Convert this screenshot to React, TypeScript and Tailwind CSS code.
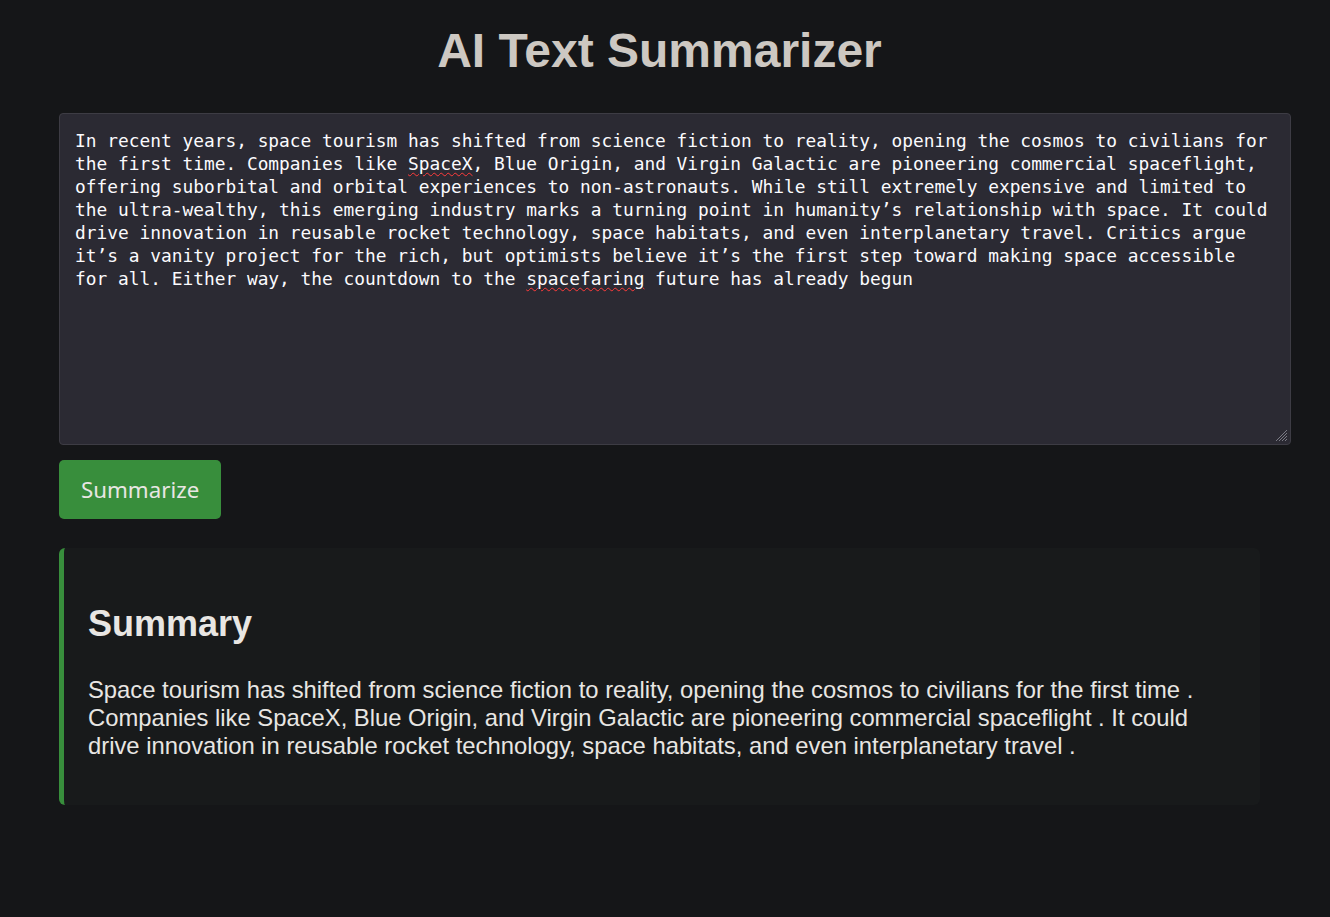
import React from "react";

function Grip() {
  return (
    <svg className="absolute right-[2px] bottom-[2px]" width="13" height="13" viewBox="0 0 13 13">
      <line x1="12" y1="1" x2="1" y2="12" stroke="#7a7a84" strokeWidth="1" />
      <line x1="12" y1="4" x2="4" y2="12" stroke="#7a7a84" strokeWidth="1" />
      <line x1="12" y1="7" x2="7" y2="12" stroke="#7a7a84" strokeWidth="1" />
      <line x1="12" y1="10" x2="10" y2="12" stroke="#7a7a84" strokeWidth="1" />
    </svg>
  );
}

const miss = "underline decoration-wavy decoration-[#ff3b3b] decoration-1 underline-offset-[2px]";

export default function App() {
  return (
    <div className="min-h-[917px] w-full bg-[#151618] font-['Liberation_Sans',Arial,sans-serif]">
      <div className="ml-[59px] w-[1201px] pt-[23px]">
        <h1 className="text-center text-[48px] font-bold leading-[56px] text-[#cdc8c2]">AI Text Summarizer</h1>
        <div
          role="textbox"
          className="relative mt-[34px] h-[332px] w-[1232px] rounded-[4px] border border-[#3d3c44] bg-[#2b2a33] px-[15px] py-[15px] font-['DejaVu_Sans_Mono',monospace] text-[17.85px] leading-[23px] whitespace-pre-wrap text-[#fbfbfe]"
        >
          In recent years, space tourism has shifted from science fiction to reality, opening the cosmos to civilians for the first time. Companies like <span className={miss}>SpaceX</span>, Blue Origin, and Virgin Galactic are pioneering commercial spaceflight, offering suborbital and orbital experiences to non-astronauts. While still extremely expensive and limited to the ultra-wealthy, this emerging industry marks a turning point in humanity’s relationship with space. It could drive innovation in reusable rocket technology, space habitats, and even interplanetary travel. Critics argue it’s a vanity project for the rich, but optimists believe it’s the first step toward making space accessible for all. Either way, the countdown to the <span className={miss}>spacefaring</span> future has already begun
          <Grip />
        </div>
        <button className="mt-[15px] h-[59px] rounded-[5px] bg-[#388e3c] px-[22px] font-['Noto_Sans',sans-serif] text-[22.3px] text-[#e8e6e3]">
          Summarize
        </button>
        <div className="mt-[29px] h-[257px] rounded-[6px] border-l-[5px] border-[#388e3c] bg-[#181a1b] pl-[24px] pr-[24px] pt-[54px]">
          <h2 className="text-[36px] font-bold leading-[44px] text-[#e8e6e3]">Summary</h2>
          <p className="mt-[30px] text-[23.8px] leading-[28px] text-[#e8e6e3]">
            Space tourism has shifted from science fiction to reality, opening the cosmos to civilians for the first time . Companies like SpaceX, Blue Origin, and Virgin Galactic are pioneering commercial spaceflight . It could drive innovation in reusable rocket technology, space habitats, and even interplanetary travel .
          </p>
        </div>
      </div>
    </div>
  );
}
